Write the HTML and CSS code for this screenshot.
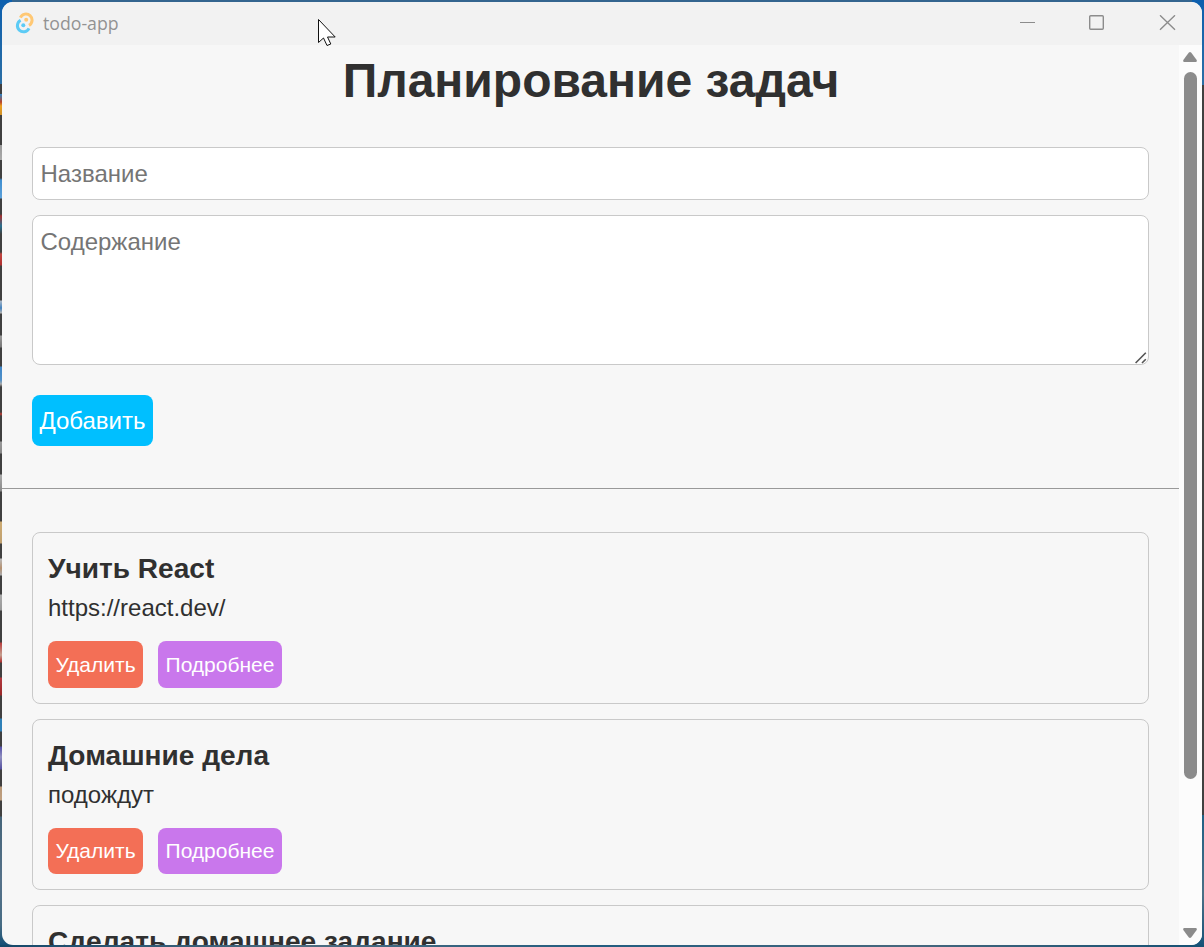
FILE: index.html
```html
<!DOCTYPE html>
<html lang="ru">
<head>
<meta charset="utf-8">
<title>todo-app</title>
<link rel="stylesheet" href="styles.css">
</head>
<body>
<div class="window">
  <header class="titlebar">
    <svg class="logo" width="20" height="22" viewBox="0 0 20 22" fill="none">
      <path d="M5.4 5.6A6.1 6.1 0 1 1 14 13.4" stroke="#ffc874" stroke-width="3"/>
      <path d="M14 16.3A6.1 6.1 0 1 1 5.6 8.3" stroke="#5ccbf5" stroke-width="3"/>
      <circle cx="11.2" cy="7.7" r="2" fill="#ffc874"/>
      <circle cx="8.3" cy="13.3" r="2" fill="#5ccbf5"/>
    </svg>
    <span class="app-name">todo-app</span>
    <svg class="controls" width="156" height="16" viewBox="0 0 156 16" fill="none" stroke="#8c8c8c" stroke-width="1.4">
      <path d="M0 7.5H15" stroke-width="1"/>
      <rect x="69.7" y=".7" width="13.6" height="13.6" rx="1"/>
      <path d="M140 .3L155 14.8M155 .3L140 14.8"/>
    </svg>
  </header>
  <div class="viewport">
    <main class="page">
      <section class="planner">
        <h1>Планирование задач</h1>
        <form class="form">
          <input class="field" type="text" placeholder="Название">
          <div class="area-wrap">
            <textarea class="field area" placeholder="Содержание"></textarea>
            <svg class="grip" width="12" height="12" viewBox="0 0 12 12" stroke="#555" stroke-width="1.6"><path d="M.6 11L10.8 .8M7 11L10.8 7.2"/></svg>
          </div>
          <button class="btn add" type="button">Добавить</button>
        </form>
      </section>
      <section class="list">
        <article class="card">
          <h2>Учить React</h2>
          <p>https://react.dev/</p>
          <div class="actions"><button class="btn delete">Удалить</button><button class="btn more">Подробнее</button></div>
        </article>
        <article class="card">
          <h2>Домашние дела</h2>
          <p>подождут</p>
          <div class="actions"><button class="btn delete">Удалить</button><button class="btn more">Подробнее</button></div>
        </article>
        <article class="card">
          <h2>Сделать домашнее задание</h2>
        </article>
      </section>
    </main>
    <div class="scrollbar">
      <svg width="14" height="10" viewBox="0 0 14 10" fill="#8b8b8b"><path d="M5.7 .7Q7-.6 8.3 .7L13.7 8Q14.2 10 12.7 10H1.3Q-.2 10 .3 8Z"/></svg>
      <div class="thumb"></div>
      <svg class="down" width="14" height="10" viewBox="0 0 14 10" fill="#8b8b8b"><path d="M5.7 9.3Q7 10.6 8.3 9.3L13.7 2Q14.2 0 12.7 0H1.3Q-.2 0 .3 2Z"/></svg>
    </div>
  </div>
</div>
<svg class="cursor" width="19" height="28" viewBox="0 0 19 28" fill="#fff" stroke="#111" stroke-width="1"><path d="M.5 .5V23.5L5.5 19L9 26.5L12.8 25L9.5 18H17.2Z"/></svg>
</body>
</html>
```
FILE: styles.css
```css
* { box-sizing: border-box; }
body {
  margin: 0;
  width: 1204px;
  height: 947px;
  padding: 2px;
  overflow: hidden;
  font-family: "Liberation Sans", Arial, sans-serif;
  color: #303030;
  background:
    linear-gradient(#34658f, #34658f) 12px 0 / 1180px 2px no-repeat,
    linear-gradient(90deg, #14486a, #4d6c80, #235d80, #46677d, #165174) 0 945px / 1204px 2px no-repeat,
    linear-gradient(#0c5fae, #2c6fa5) 1190px 0 / 14px 85px no-repeat,
    linear-gradient(#404040, #404040) 1202px 85px / 2px 730px no-repeat,
    linear-gradient(
      #0c5fae 0, #2c6fa5 84px, #404040 84px, #404040 94px, #2d86c8 94px, #b8442a 102px, #eaa020 106px, #d09028 115px,
      #404040 115px, #404040 145px, #999 145px, #aaa 160px, #404040 160px, #404040 178px, #3f8fd0 180px, #5ba0da 198px,
      #404040 199px, #404040 214px, #a53030 216px, #287090 226px, #404040 234px, #404040 252px, #c04540 254px, #b03030 265px,
      #404040 266px, #404040 300px, #aab8c8 301px, #4382bd 308px, #b4b4b4 313px, #404040 314px, #404040 335px, #999 336px,
      #777 347px, #404040 348px, #404040 366px, #3f86c8 367px, #5090c8 380px, #aaa 384px, #404040 387px, #404040 412px,
      #c03a32 414px, #404040 416px, #404040 441px, #999 442px, #888 453px, #404040 454px, #404040 474px, #aaa 475px,
      #888 491px, #404040 492px, #404040 521px, #cdab72 522px, #c0a070 543px, #404040 544px, #404040 558px, #bbb 559px,
      #b49070 568px, #aaa 575px, #404040 576px, #404040 594px, #aaa 595px, #999 610px, #404040 611px, #404040 642px,
      #b94040 643px, #c5a090 655px, #b03030 662px, #404040 663px, #404040 677px, #b23a40 678px, #9a2828 695px, #404040 696px,
      #404040 718px, #2d80b8 719px, #3080b8 731px, #404040 732px, #404040 746px, #5550a8 747px, #9090c0 757px, #5550a0 769px,
      #404040 770px, #404040 786px, #b89878 787px, #c0a080 800px, #404040 801px, #404040 816px, #45657a 817px, #56728a 880px,
      #476c84 925px, #104c74 947px) 0 0 / 14px 947px no-repeat,
    linear-gradient(#1f6084, #4b7086 60%, #155278) 1190px 815px / 14px 132px no-repeat,
    #404040;
}
.window {
  display: flex;
  flex-direction: column;
  width: 1200px;
  height: 943px;
  border-radius: 11px;
  overflow: hidden;
  background: #f7f7f7;
}
.titlebar {
  flex: none;
  display: flex;
  align-items: center;
  height: 43px;
  padding: 0 26px 2px 13px;
  background: #f2f2f2;
}
.app-name {
  margin-left: 8px;
  font: 17.7px "Open Sans", "Noto Sans", sans-serif;
  color: #929292;
}
.controls { margin-left: auto; }
.viewport { flex: 1; min-height: 0; display: flex; }
.page { flex: 1; overflow: hidden; }
.planner { padding: 9px 30px 42px; border-bottom: 1px solid #999; }
h1 {
  margin: 0;
  padding-left: 1px;
  font-size: 48px;
  line-height: 54px;
  text-align: center;
}
.form { display: flex; flex-direction: column; margin-top: 39px; }
.field {
  display: block;
  width: 100%;
  height: 53px;
  padding: 0 7.5px;
  border: 1px solid #c9c9c9;
  border-radius: 8px;
  background: #fff;
  font: 24px "Liberation Sans", Arial, sans-serif;
  outline: none;
}
.field::placeholder { color: #757575; opacity: 1; }
.area-wrap { position: relative; margin: 15px 0 30px; }
.area { height: 150px; padding-top: 12px; resize: none; }
.grip { position: absolute; right: 2px; bottom: 1px; }
.btn {
  height: 47px;
  padding: 0;
  border: 0;
  border-radius: 8px;
  font: 21px "Liberation Sans", Arial, sans-serif;
  color: #fff;
  white-space: nowrap;
}
.add { width: 121px; height: 51px; font-size: 24px; background: #00bfff; }
.delete { width: 95px; background: #f36f56; }
.more { width: 124px; background: #c977ec; }
.list { display: flex; flex-direction: column; gap: 15px; padding: 43px 30px; }
.card {
  height: 171.5px;
  padding: 19px 15px 0;
  border: 1px solid #c9c9c9;
  border-radius: 8px;
}
.card h2 { margin: 0; font-size: 28.08px; line-height: 34px; }
.card p { margin: 5px 0 0; height: 34px; font-size: 24px; line-height: 34px; }
.actions { display: flex; gap: 15px; margin-top: 16px; }
.card + .card .btn { height: 46px; }
.scrollbar {
  flex: none;
  display: flex;
  flex-direction: column;
  align-items: center;
  width: 23px;
  padding: 7px 0;
  background: #fcfcfc;
}
.scrollbar svg { margin-left: -1px; }
.thumb { width: 13px; height: 707px; margin-top: 10px; border-radius: 7px; background: #8b8b8b; }
.scrollbar .down { margin-top: auto; }
.cursor { position: absolute; left: 318px; top: 19px; }
```
